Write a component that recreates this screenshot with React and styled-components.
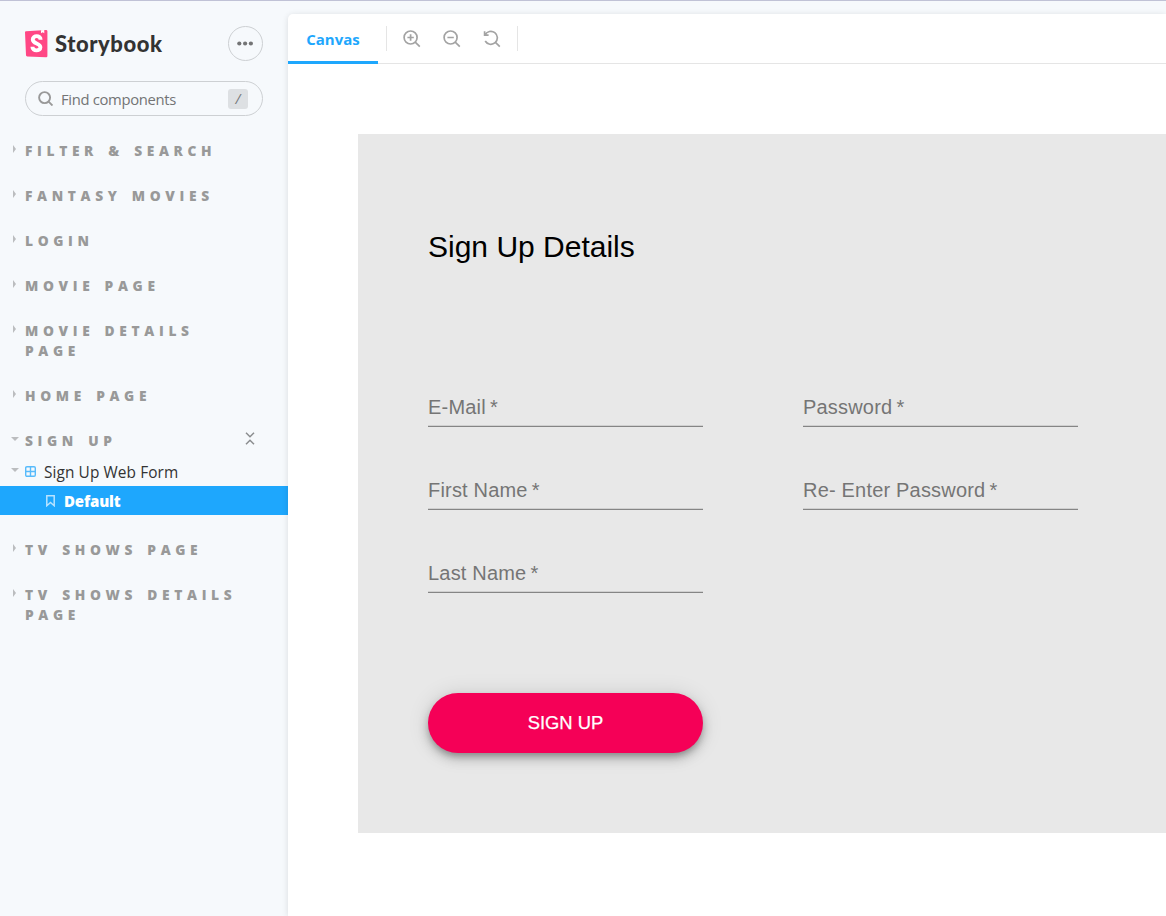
import React from 'react';
import styled, { createGlobalStyle } from 'styled-components';

const Global = createGlobalStyle`
  * { box-sizing: border-box; }
  body { margin: 0; overflow: hidden; background: #f6f9fc; }
`;
const ui = `'Open Sans', 'Noto Sans', sans-serif`;

const Shell = styled.div`
  display: flex;
  width: 1166px;
  height: 916px;
  border-top: 1px solid #c0c2d6;
  background: #f6f9fc;
  font-family: ${ui};
`;
const Sidebar = styled.aside`
  width: 288px;
  flex: none;
  padding-top: 25px;
`;
const Brand = styled.header`
  display: flex;
  align-items: center;
  height: 35px;
  padding: 0 25px;
`;
const Wordmark = styled.span`
  margin-left: 7px;
  flex: 1;
  font: 900 22px/35px Lato, sans-serif;
  letter-spacing: 0.55px;
  color: #333;
  white-space: nowrap;
`;
const MenuButton = styled.button`
  width: 35px;
  height: 35px;
  padding: 0;
  display: flex;
  align-items: center;
  justify-content: center;
  border: 1px solid #cdd0d3;
  border-radius: 50%;
  background: transparent;
`;
const Search = styled.div`
  display: flex;
  align-items: center;
  height: 35px;
  margin: 20px 25px 0;
  padding: 0 14px 0 12px;
  border: 1px solid #cdd0d3;
  border-radius: 18px;
  color: #737475;
`;
const SearchText = styled.span`
  flex: 1;
  margin-left: 8px;
  padding-top: 1px;
  font-size: 14.8px;
  letter-spacing: -0.32px;
  white-space: nowrap;
`;
const Key = styled.kbd`
  width: 20px;
  height: 20px;
  border-radius: 3px;
  background: #dde0e3;
  color: #77797b;
  font: italic 14px/19px ${ui};
  text-align: center;
`;
const Tree = styled.nav`
  padding-top: 25px;
`;
const Group = styled.div`
  display: flex;
  align-items: flex-start;
  width: 288px;
  padding: 0 ${(p) => (p.$open ? '33px' : '45px')} 0 12px;
  margin-bottom: ${(p) => (p.$open ? '6px' : '25px')};
`;
const GroupName = styled.span`
  flex: 1;
  margin-left: ${(p) => (p.$open ? '4px' : '9px')};
  font-size: 13.75px;
  line-height: 20px;
  font-weight: 800;
  letter-spacing: 4.65px;
  word-spacing: 2px;
  color: #999;
  text-transform: uppercase;
`;
const Arrow = styled.span`
  flex: none;
  width: 0;
  height: 0;
  border: solid transparent;
  ${(p) =>
    p.$open
      ? 'border-width: 4px 4px 0; border-top-color: #bbbdbf; margin: 6px 2px 0 -1px;'
      : 'border-width: 4px 0 4px 3px; border-left-color: #bbbdbf; margin: 4px 0 0 1px;'}
`;
const Item = styled.div`
  display: flex;
  align-items: center;
  height: 29px;
  padding-left: ${(p) => (p.$selected ? 45 : 12)}px;
  background: ${(p) => (p.$selected ? '#1ea7fd' : 'transparent')};
  color: ${(p) => (p.$selected ? '#fff' : '#333')};
  font-size: ${(p) => (p.$selected ? 15 : 15.4)}px;
  font-weight: ${(p) => (p.$selected ? 800 : 400)};
  letter-spacing: ${(p) => (p.$selected ? -0.15 : 0.1)}px;
  white-space: nowrap;
`;
const ItemArrow = styled(Arrow)`
  margin: 0 6px 4px -1px;
`;
const ItemName = styled.span`
  margin-left: 8px;
  padding-top: 1px;
`;
const Branch = styled.div`
  margin-bottom: 25px;
`;
const Main = styled.main`
  flex: 1;
  min-width: 0;
  margin-top: 13px;
  background: #fff;
  border-radius: 5px 0 0 0;
  box-shadow: 0 1px 6px rgba(0, 0, 0, 0.12);
  overflow: hidden;
`;
const Toolbar = styled.div`
  display: flex;
  height: 50px;
  border-bottom: 1px solid #e5e5e5;
`;
const Tab = styled.div`
  width: 90px;
  height: 50px;
  border-bottom: 3px solid #1ea7fd;
  color: #1ea7fd;
  font-size: 15px;
  font-weight: 700;
  line-height: 51px;
  text-align: center;
`;
const Divider = styled.i`
  width: 1px;
  height: 25px;
  margin: 12px 0 0 ${(p) => p.$gap}px;
  background: #e5e5e5;
`;
const Tools = styled.div`
  display: flex;
  gap: 22px;
  margin: 16px 0 0 16px;
`;
const Panel = styled.section`
  width: 808px;
  height: 699px;
  margin: 70px 0 0 70px;
  padding: 95px 70px 0;
  background: #e8e8e8;
  font-family: 'Liberation Sans', Arial, sans-serif;
`;
const Title = styled.h1`
  margin: 0;
  font-size: 30px;
  font-weight: 400;
  line-height: 36px;
  color: #000;
`;
const Fields = styled.div`
  display: grid;
  grid-template-columns: 275px 275px;
  column-gap: 100px;
  row-gap: 43px;
  margin-top: 122px;
`;
const Field = styled.label`
  height: 40px;
  border-bottom: 1px solid #858585;
  box-shadow: inset 0 -1px #d0d0d0;
  font-size: 20px;
  line-height: 40px;
  letter-spacing: 0.19px;
  color: #757575;
  white-space: pre;
`;
const Required = styled.span`
  margin-left: -1.6px;
`;
const Submit = styled.button`
  display: block;
  width: 275px;
  height: 60px;
  margin-top: 100px;
  padding: 0;
  border: 0;
  border-radius: 30px;
  background: #f50057;
  box-shadow: 0 4px 6px -1px rgba(0, 0, 0, 0.25), 0 6px 12px rgba(0, 0, 0, 0.16), 0 1px 22px rgba(0, 0, 0, 0.12);
  color: #fff;
  font: 18.4px/60px 'Liberation Sans', Arial, sans-serif;
  -webkit-text-stroke: 0.25px #fff;
`;

const Logo = () => (
  <svg width="23" height="28" viewBox="0 0 23 28">
    <path d="M0 2.3 Q0 1.3 1 1.2 L21 0 Q22.4 0 22.4 1.2 V26 Q22.4 27.4 21 27.3 L2.2 26.4 Q1 26.3 1 25.2Z" fill="#ff4785" />
    <path d="M16 0.3 L19.2 0.1 L19.3 3.2 L17.7 2.2 L16 3.3Z" fill="#fff" />
    <path d="M15.6 9.8 C15.6 4.9 7.8 5.1 7.8 9.5 C7.8 14.2 15.4 12.8 15.4 17.3 C15.4 21.5 7.4 21.5 7.4 16.8" fill="none" stroke="#fff" strokeWidth="3.9" />
  </svg>
);
const Dots = () => (
  <svg width="17" height="5" viewBox="0 0 17 5" fill="#737475">
    <circle cx="2.3" cy="2.5" r="2.1" /><circle cx="8.1" cy="2.5" r="2.1" /><circle cx="13.9" cy="2.5" r="2.1" />
  </svg>
);
const Magnifier = () => (
  <svg width="15" height="15" viewBox="0 0 15 15" fill="none" stroke="#999" strokeWidth="1.9">
    <circle cx="6.6" cy="6.6" r="5.5" /><path d="M10.6 10.6 L14.5 14.5" />
  </svg>
);
const ZoomIcon = ({ kind }) => (
  <svg width="18" height="18" viewBox="0 0 18 18" fill="none" stroke="#a3a3a3" strokeWidth="1.7">
    {kind === 'reset' ? (
      <path d="M1.6 1.2 V5.2 H5.6 M2 5 A6.5 6.5 0 1 1 2.2 11" />
    ) : (
      <circle cx="7.6" cy="7.5" r="6.5" />
    )}
    <path d="M12.2 12.1 L16.8 16.7" />
    {kind !== 'reset' && <path d="M4.4 7.5 H10.8" />}
    {kind === 'in' && <path d="M7.6 4.3 V10.7" />}
  </svg>
);
const CollapseIcon = styled.svg`
  flex: none;
  margin-top: 1px;
`;
const Collapse = () => (
  <CollapseIcon width="10" height="13" viewBox="0 0 10 13" fill="none" stroke="#8b8d8f" strokeWidth="1.5">
    <path d="M1 .7 L5 4.7 L9 .7 M1 12.3 L5 8.3 L9 12.3" />
  </CollapseIcon>
);
const ComponentIcon = () => (
  <svg width="11" height="11" viewBox="0 0 11 11" fill="none" stroke="#58bbfb" strokeWidth="1.4">
    <rect x=".7" y=".7" width="9.6" height="9.6" rx="1.2" /><path d="M5.5 .6 V10.4 M.6 5.5 H10.4" />
  </svg>
);
const Bookmark = () => (
  <svg width="11" height="12" viewBox="0 0 11 12" fill="none" stroke="#b8e3ff" strokeWidth="1.5">
    <path d="M1.8 .8 H9.2 V10.7 L5.5 7.5 L1.8 10.7Z" />
  </svg>
);

const before = ['Filter & Search', 'Fantasy Movies', 'Login', 'Movie Page', 'Movie Details Page', 'Home Page'];
const after = ['TV Shows Page', 'TV Shows Details Page'];
const fields = ['E-Mail', 'Password', 'First Name', 'Re- Enter Password', 'Last Name'];

const ClosedGroup = ({ name }) => (
  <Group><Arrow /><GroupName>{name}</GroupName></Group>
);

export default function App() {
  return (
    <>
      <Global />
      <Shell>
        <Sidebar>
          <Brand><Logo /><Wordmark>Storybook</Wordmark><MenuButton><Dots /></MenuButton></Brand>
          <Search><Magnifier /><SearchText>Find components</SearchText><Key>/</Key></Search>
          <Tree>
            {before.map((n) => <ClosedGroup key={n} name={n} />)}
            <Group $open><Arrow $open /><GroupName $open>Sign Up</GroupName><Collapse /></Group>
            <Branch>
              <Item><ItemArrow $open /><ComponentIcon /><ItemName>Sign Up Web Form</ItemName></Item>
              <Item $selected><Bookmark /><ItemName>Default</ItemName></Item>
            </Branch>
            {after.map((n) => <ClosedGroup key={n} name={n} />)}
          </Tree>
        </Sidebar>
        <Main>
          <Toolbar>
            <Tab>Canvas</Tab>
            <Divider $gap={8} />
            <Tools><ZoomIcon kind="in" /><ZoomIcon kind="out" /><ZoomIcon kind="reset" /></Tools>
            <Divider $gap={16} />
          </Toolbar>
          <Panel>
            <Title>Sign Up Details</Title>
            <Fields>
              {fields.map((f) => <Field key={f}>{f}<Required> *</Required></Field>)}
            </Fields>
            <Submit>SIGN UP</Submit>
          </Panel>
        </Main>
      </Shell>
    </>
  );
}
